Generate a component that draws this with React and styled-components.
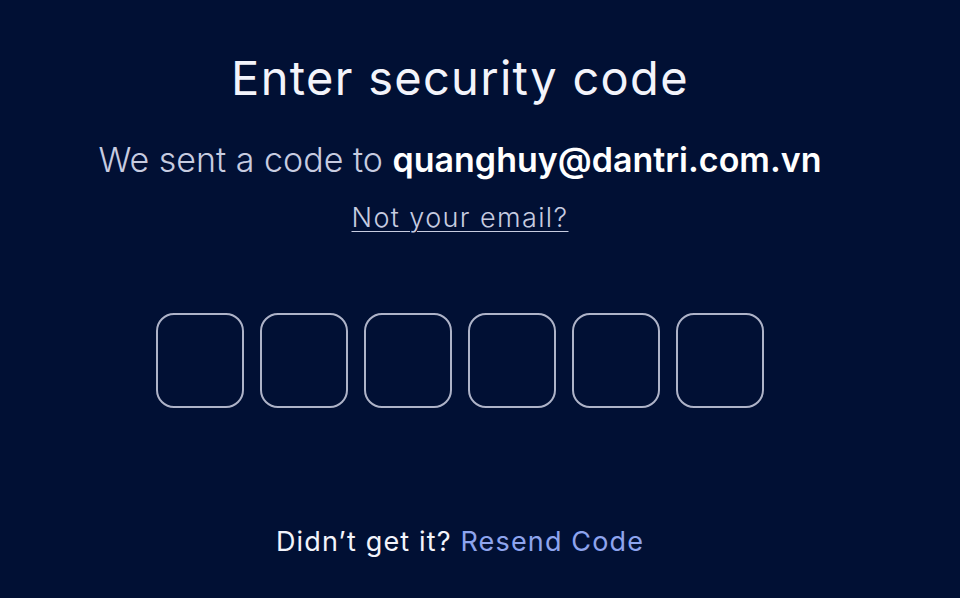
import React from "react";
import styled, { createGlobalStyle } from "styled-components";

const Global = createGlobalStyle`
  html, body { margin: 0; padding: 0; background: #011034; }
  body { font-family: "Inter", "Open Sans", sans-serif; }
`;

const Page = styled.div`
  width: 920px;
  height: 598px;
  background: #011034;
  display: flex;
  flex-direction: column;
  align-items: center;
  box-sizing: border-box;
  padding-top: 54px;
`;

const Title = styled.h1`
  margin: 0;
  font-size: 47px;
  line-height: 48px;
  font-weight: 400;
  color: #f3f4fb;
  letter-spacing: 1.3px;
`;

const Sub = styled.p`
  margin: 38px 0 0;
  font-size: 34px;
  line-height: 40px;
  font-weight: 300;
  color: #c7cce0;
  white-space: nowrap;
`;

const Email = styled.strong`
  font-weight: 600;
  color: #ffffff;
`;

const Link = styled.a`
  margin-top: 22px;
  font-size: 27px;
  line-height: 32px;
  font-weight: 300;
  color: #c7cce0;
  letter-spacing: 1.4px;
  text-decoration: underline;
  text-underline-offset: 4px;
  text-decoration-thickness: 1px;
  cursor: pointer;
`;

const Boxes = styled.div`
  margin-top: 79px;
  display: flex;
  gap: 16px;
`;

const Box = styled.input`
  width: 88px;
  height: 95px;
  box-sizing: border-box;
  border: 2px solid #aeb3c8;
  border-radius: 18px;
  background: transparent;
  outline: none;
  color: #fff;
  font-size: 40px;
  text-align: center;
  font-family: inherit;
`;

const Footer = styled.p`
  margin: 118px 0 0;
  font-size: 27px;
  line-height: 32px;
  font-weight: 400;
  color: #f3f4fb;
  letter-spacing: 1.15px;
`;

const Resend = styled.span`
  color: #8ea4ee;
  cursor: pointer;
`;

export default function App() {
  return (
    <>
      <Global />
      <Page>
        <Title>Enter security code</Title>
        <Sub>
          We sent a code to <Email>quanghuy@dantri.com.vn</Email>
        </Sub>
        <Link>Not your email?</Link>
        <Boxes>
          {[0, 1, 2, 3, 4, 5].map((i) => (
            <Box key={i} maxLength={1} />
          ))}
        </Boxes>
        <Footer>
          Didn’t get it? <Resend>Resend Code</Resend>
        </Footer>
      </Page>
    </>
  );
}
